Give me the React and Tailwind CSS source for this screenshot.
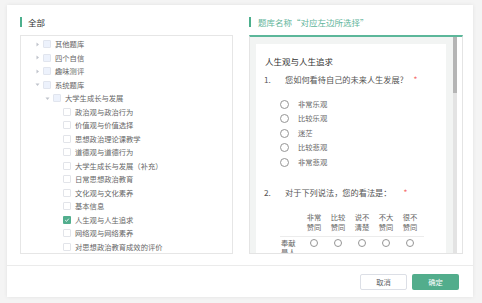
import React from 'react';

const tree = [
  { label: '其他题库', level: 0, arrow: 'right', disabled: true },
  { label: '四个自信', level: 0, arrow: 'right', disabled: true },
  { label: '趣味测评', level: 0, arrow: 'right', disabled: true },
  { label: '系统题库', level: 0, arrow: 'down', disabled: true },
  { label: '大学生成长与发展', level: 1, arrow: 'down', disabled: true },
  { label: '政治观与政治行为', level: 2 },
  { label: '价值观与价值选择', level: 2 },
  { label: '思想政治理论课教学', level: 2 },
  { label: '道德观与道德行为', level: 2 },
  { label: '大学生成长与发展（补充）', level: 2 },
  { label: '日常思想政治教育', level: 2 },
  { label: '文化观与文化素养', level: 2 },
  { label: '基本信息', level: 2 },
  { label: '人生观与人生追求', level: 2, checked: true },
  { label: '网络观与网络素养', level: 2 },
  { label: '对思想政治教育成效的评价', level: 2 },
];

const options = ['非常乐观', '比较乐观', '迷茫', '比较悲观', '非常悲观'];
const columns = [
  ['非常', '赞同'],
  ['比较', '赞同'],
  ['说不', '清楚'],
  ['不大', '赞同'],
  ['很不', '赞同'],
];

const Caret = ({ dir }) => {
  if (!dir) return <span className="block w-[8px] shrink-0" />;
  return (
    <span className="w-[8px] shrink-0 flex items-center justify-center">
      <svg width="5" height="5" viewBox="0 0 10 10">
        {dir === 'right' ? (
          <path d="M3 1 L8 5 L3 9 Z" fill="#c0c4cc" />
        ) : (
          <path d="M1 3 L9 3 L5 8 Z" fill="#c0c4cc" />
        )}
      </svg>
    </span>
  );
};

const Checkbox = ({ checked, disabled }) => {
  if (checked) {
    return (
      <span className="ml-[2px] w-[8px] h-[8px] shrink-0 rounded-[1px] bg-[#52ae8e] flex items-center justify-center">
        <svg width="6" height="6" viewBox="0 0 10 10">
          <path d="M2 5.2 L4.2 7.3 L8 2.8" stroke="#fff" strokeWidth="1.4" fill="none" />
        </svg>
      </span>
    );
  }
  return (
    <span
      className={
        'ml-[2px] block w-[8px] h-[8px] shrink-0 rounded-[1px] border ' +
        (disabled ? 'bg-[#edf2fc] border-[#e1e5ee]' : 'bg-white border-[#e2e4e9]')
      }
    />
  );
};

const Radio = ({ size = 9 }) => (
  <span
    className="rounded-full border border-[#959595] bg-white inline-block shrink-0"
    style={{ width: size, height: size }}
  />
);

const SectionTitle = ({ children, green }) => (
  <div className="flex items-center h-[10px] mb-[8px]">
    <span className="w-[2px] h-[10px] bg-[#4caf8d]" />
    <span
      className={
        'text-[8.5px] leading-[10px] ' +
        (green ? 'ml-[7px] text-[#5fb59b]' : 'ml-[6px] text-[#333]')
      }
    >
      {children}
    </span>
  </div>
);

export default function App() {
  return (
    <div
      className="w-[482px] h-[303px] bg-[#f4f4f4] pt-[5px] pl-[7px] overflow-hidden"
      style={{ fontFamily: '"Noto Sans CJK SC", "Noto Sans", sans-serif' }}
    >
      <div className="w-[466px] h-[292px] bg-white shadow-[0_0_4px_rgba(0,0,0,0.08)] flex flex-col">
        {/* 主体 */}
        <div className="flex gap-[16px] pl-[13px] pt-[12px] pb-[11px]">
          {/* 左侧题库树 */}
          <div className="w-[213px]">
            <SectionTitle>全部</SectionTitle>
            <div className="h-[219px] border border-[#e6e6e6] overflow-hidden pt-[1.5px]">
              {tree.map((node) => (
                <div
                  key={node.label}
                  className="h-[13.5px] flex items-center"
                  style={{ paddingLeft: 12 + node.level * 10 }}
                >
                  <Caret dir={node.arrow} />
                  <Checkbox checked={node.checked} disabled={node.disabled} />
                  <span className="ml-[4px] text-[7.3px] leading-[10px] text-[#666] whitespace-nowrap">
                    {node.label}
                  </span>
                </div>
              ))}
            </div>
          </div>

          {/* 右侧预览 */}
          <div className="w-[214px]">
            <SectionTitle green>题库名称“对应左边所选择”</SectionTitle>
            <div className="h-[219px] border border-[#e4e4e4] border-t-2 border-t-[#5cb79a] flex overflow-hidden">
              <div className="flex-1 bg-[#f2f4f3] pl-[6px] pt-[7px] pr-[7px] overflow-hidden">
                <div className="bg-white h-[300px] pt-[11px] text-[#555]">
                  <div className="pl-[9px] text-[8.5px] leading-[12px] text-[#333]">人生观与人生追求</div>

                  <div className="mt-[6px] flex items-center text-[8.2px] leading-[12px]">
                    <span className="w-[29px] pl-[8px]">1.</span>
                    <span>您如何看待自己的未来人生发展?</span>
                    <span className="ml-[10px] text-[#f56c6c]">*</span>
                  </div>

                  <div className="mt-[11.75px] pl-[24px]">
                    {options.map((o) => (
                      <div key={o} className="h-[14.5px] flex items-center">
                        <Radio />
                        <span className="ml-[9px] text-[7.3px] text-[#666]">{o}</span>
                      </div>
                    ))}
                  </div>

                  <div className="mt-[16.75px] flex items-center text-[8.2px] leading-[12px]">
                    <span className="w-[29px] pl-[8px]">2.</span>
                    <span>对于下列说法，您的看法是：</span>
                    <span className="ml-[12px] text-[#f56c6c]">*</span>
                  </div>

                  <div className="ml-[24px] w-[144px] mt-[14px]">
                    <div className="flex pb-[4px] border-b border-[#ececec] text-[7.3px] leading-[10px] text-[#666]">
                      <span className="w-[22px]" />
                      {columns.map((c) => (
                        <span key={c.join('')} className="w-[24px] flex flex-col items-center">
                          <span>{c[0]}</span>
                          <span>{c[1]}</span>
                        </span>
                      ))}
                    </div>
                    <div className="flex pt-[1.5px] text-[7.3px] leading-[9px] text-[#666]">
                      <span className="w-[22px] pl-[1px] flex flex-col">
                        <span>奉献</span>
                        <span>是人</span>
                      </span>
                      {columns.map((c) => (
                        <span key={c.join('')} className="w-[24px] flex justify-center pt-[0.5px]">
                          <Radio size={8} />
                        </span>
                      ))}
                    </div>
                  </div>
                </div>
              </div>
              <div className="w-[3.5px] bg-[#e3e3e3] flex flex-col">
                <div className="h-[56px] bg-[#b5b5b5]" />
              </div>
              <div className="w-[5.5px] bg-white" />
            </div>
          </div>
        </div>

        {/* 底部按钮 */}
        <div className="flex-1 border-t border-[#ebebeb] flex justify-end items-start pt-[8px] pr-[14px] gap-[5px]">
          <button className="w-[47px] h-[16px] border border-[#dcdfe6] rounded-[2px] bg-white text-[7.3px] text-[#606266] flex items-center justify-center">
            取消
          </button>
          <button className="w-[47px] h-[16px] rounded-[2px] bg-[#52ad8c] text-[7.3px] text-white flex items-center justify-center">
            确定
          </button>
        </div>
      </div>
    </div>
  );
}
